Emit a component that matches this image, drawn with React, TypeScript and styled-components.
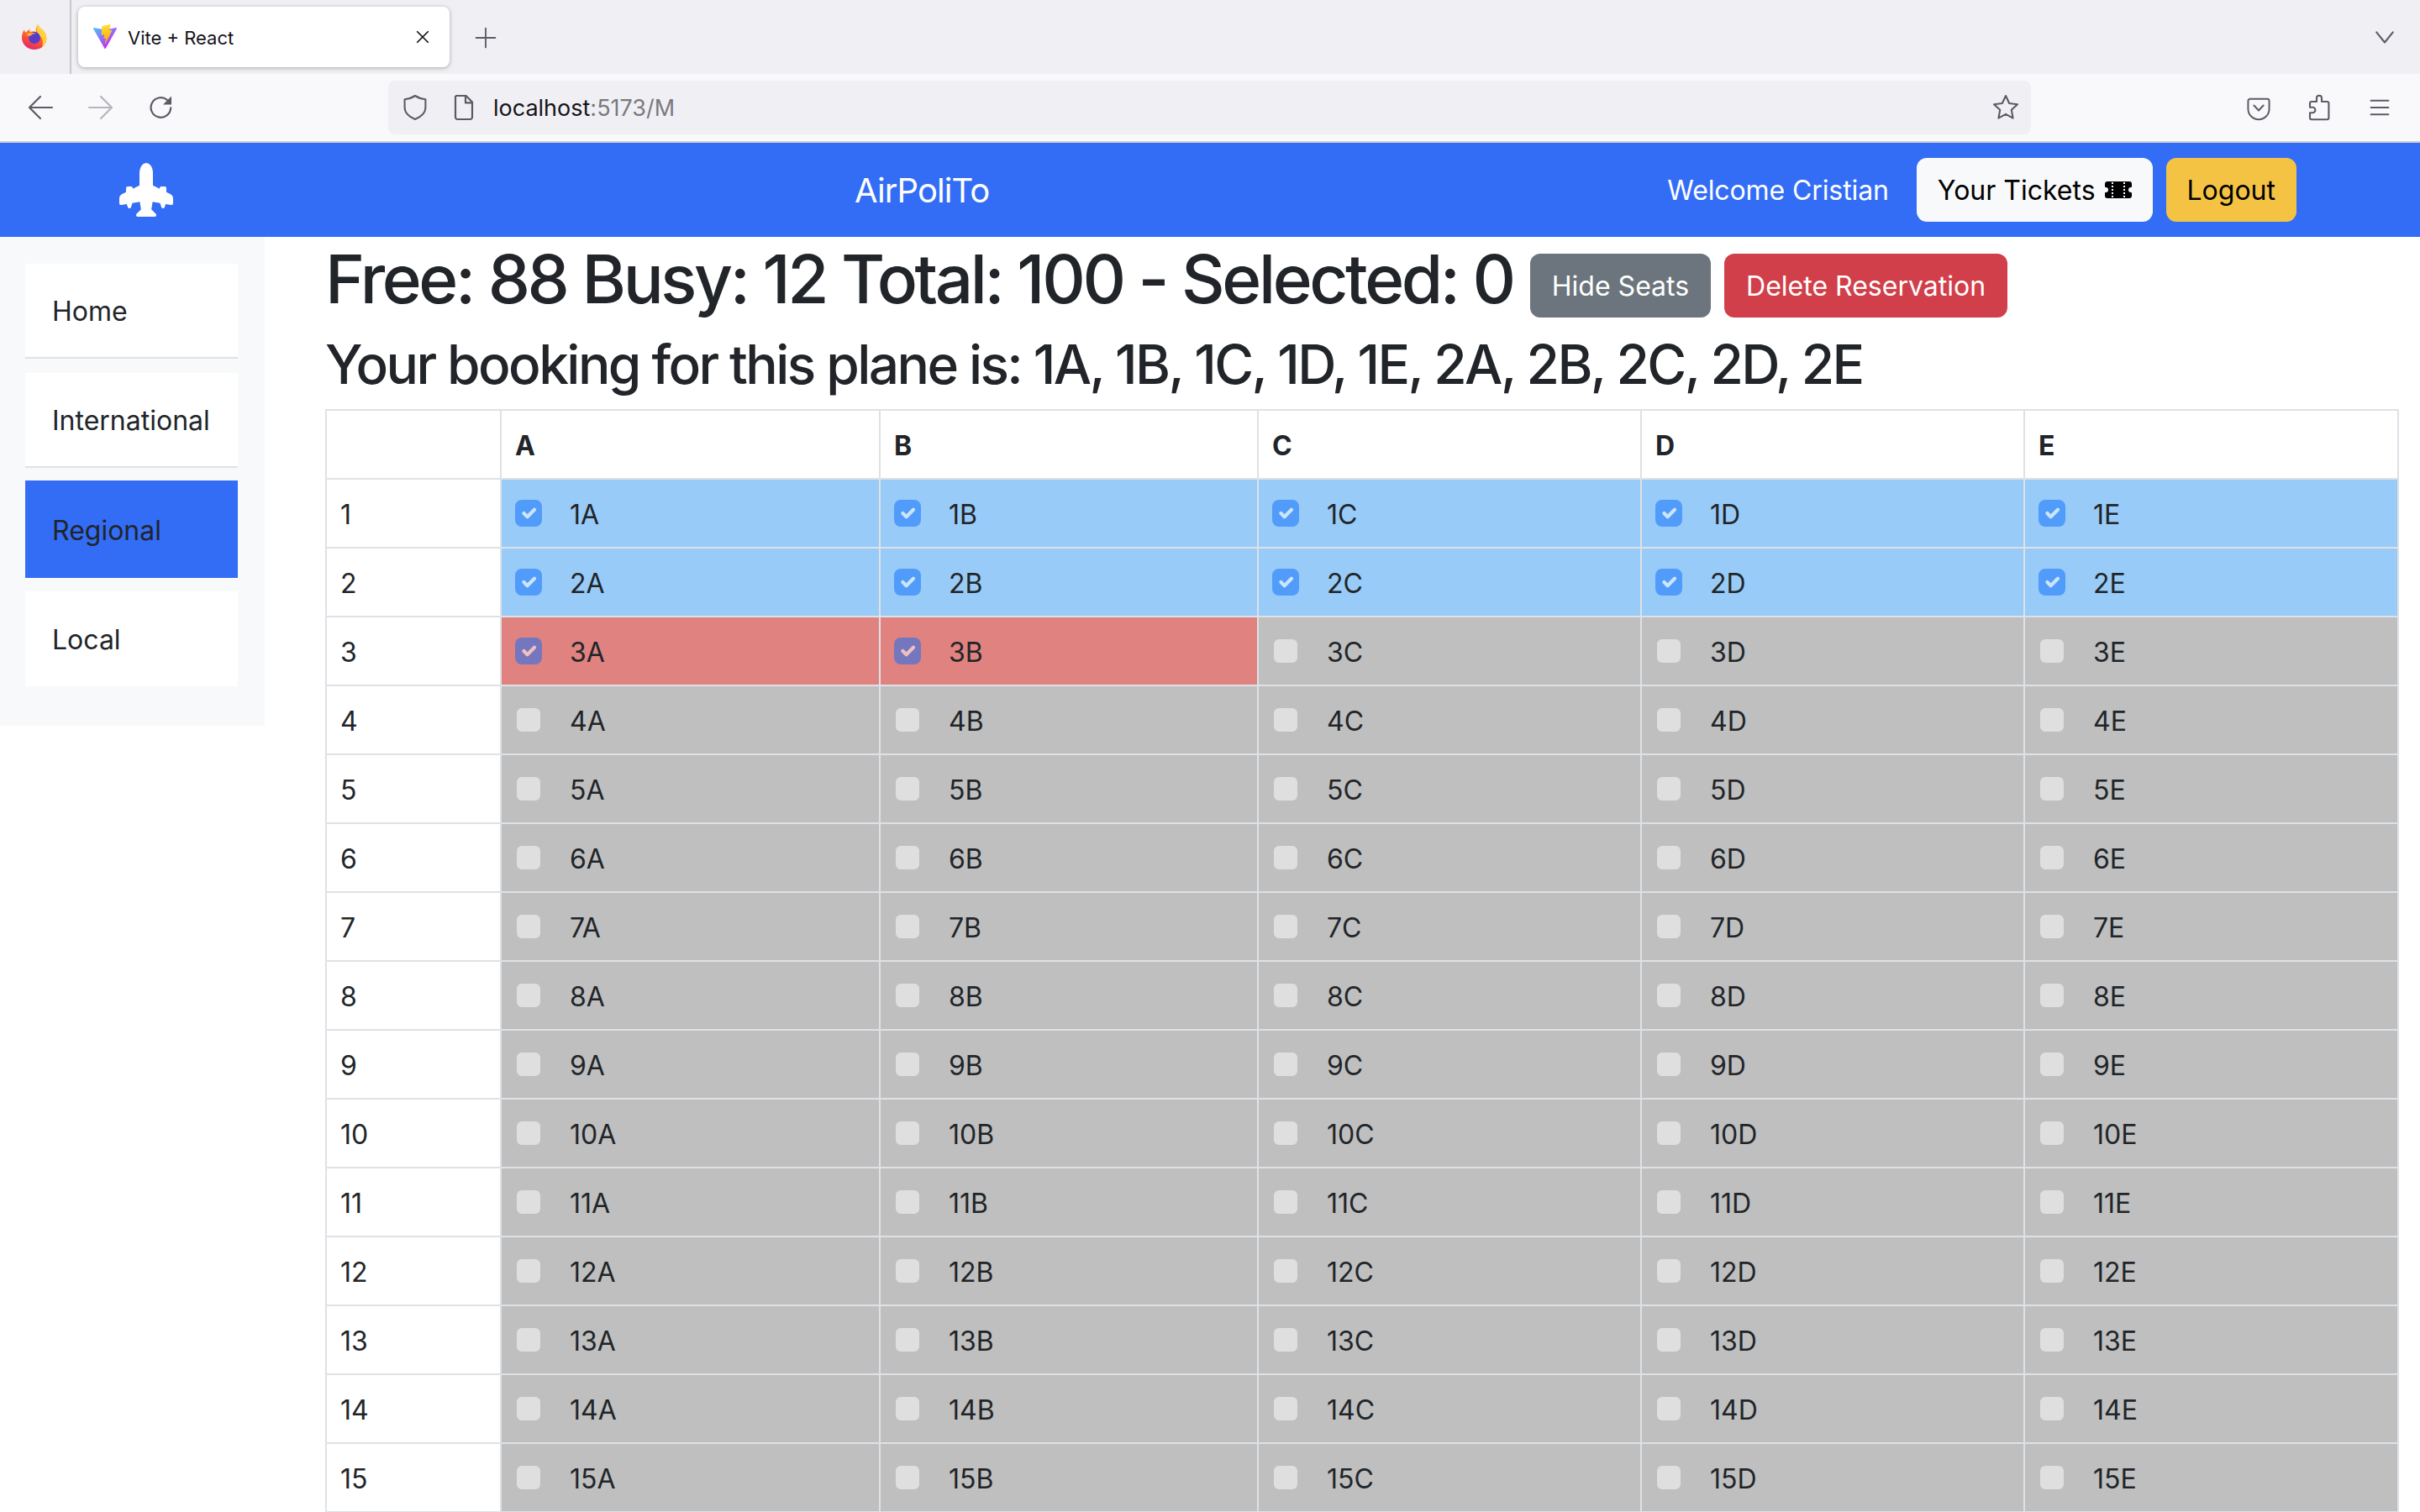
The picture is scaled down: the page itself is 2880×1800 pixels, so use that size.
import styled, { createGlobalStyle } from "styled-components";
import { BsAirplaneEnginesFill, BsTicketPerforatedFill } from "react-icons/bs";

const GlobalStyle = createGlobalStyle`
    html, body {
        margin: 0;
        height: 1800px;
        overflow: hidden;
        background: #fff;
        font-family: Inter, "Liberation Sans", sans-serif;
        color: #212529;
    }
    * {
        box-sizing: border-box;
    }
`

const TabStrip = styled.div`
    height: 88px;
    background: #f0f0f4;
    display: flex;
    align-items: flex-start;
`
const AppIconBox = styled.div`
    width: 85px;
    height: 88px;
    padding: 28px 0 0 25px;
    border-right: 2px solid #c8c8cc;
`
const Tab = styled.div`
    width: 442px;
    height: 72px;
    margin: 8px 0 0 8px;
    padding: 0 22px 0 16px;
    background: #fff;
    border-radius: 8px;
    box-shadow: 0 1px 5px rgba(0, 0, 0, 0.3);
    display: flex;
    align-items: center;
`
const TabTitle = styled.span`
    font-size: 22px;
    margin: 2px 0 0 11px;
    color: #15141a;
    flex: 1;
`
const IconButton = styled.span<{ $size: number; $ml?: number; $mt?: number; $color?: string }>`
    display: flex;
    width: ${(p) => p.$size}px;
    height: ${(p) => p.$size}px;
    margin-left: ${(p) => p.$ml || 0}px;
    margin-top: ${(p) => p.$mt || 0}px;
    color: ${(p) => p.$color || "#5b5b66"};
    flex-shrink: 0;
    svg {
        width: 100%;
        height: 100%;
        display: block;
    }
`
const Toolbar = styled.div`
    height: 82px;
    background: #f9f9fb;
    border-bottom: 2px solid #cfcfd3;
    padding: 8px 0 0 32px;
    display: flex;
    align-items: flex-start;
`
const UrlBar = styled.div`
    width: 1955px;
    height: 64px;
    margin-left: 254px;
    padding: 0 14px 0 16px;
    background: #f0f0f4;
    border-radius: 8px;
    display: flex;
    align-items: center;
`
const UrlText = styled.span`
    font-size: 27px;
    margin: 1px 0 0 19px;
    color: #15141a;
    flex: 1;
    span {
        color: #7a7a80;
    }
`
const NavBar = styled.nav`
    height: 112px;
    background: #336df6;
    padding: 0 147px 0 142px;
    display: flex;
    align-items: center;
    color: #fff;
`
const Brand = styled.span`
    font-size: 40px;
    letter-spacing: -0.9px;
    margin-left: 811px;
`
const NavRight = styled.div`
    margin-left: auto;
    display: flex;
    align-items: center;
    gap: 16px;
`
const Welcome = styled.span`
    font-size: 32px;
    letter-spacing: -0.1px;
    margin-right: 17px;
`
const Button = styled.button<{ $bg: string; $fg: string }>`
    height: 76px;
    padding: 0 23px;
    border: 2px solid ${(p) => p.$bg};
    border-radius: 12px;
    background: ${(p) => p.$bg};
    color: ${(p) => p.$fg};
    font-family: inherit;
    font-size: 32px;
    display: inline-flex;
    align-items: center;
    gap: 11px;
`
const Body = styled.div`
    display: flex;
    align-items: flex-start;
`
const Sidebar = styled.aside`
    width: 315px;
    flex-shrink: 0;
    background: #f8f9fa;
    padding: 32px 32px 47px 30px;
    display: flex;
    flex-direction: column;
    gap: 17px;
`
const SideItem = styled.div<{ $active?: boolean; $line?: boolean }>`
    height: ${(p) => (p.$active ? 116 : 113)}px;
    margin: ${(p) => (p.$active ? "-2px 0 -1px" : "0")};
    padding: 2px 0 0 32px;
    background: ${(p) => (p.$active ? "#336df6" : "#fff")};
    border-bottom: ${(p) => (p.$line ? "2px solid #dee2e6" : "none")};
    font-size: 32px;
    display: flex;
    align-items: center;
`
const Main = styled.main`
    flex: 1;
    padding: 2px 26px 0 72px;
`
const SummaryRow = styled.div`
    display: flex;
    align-items: flex-start;
    margin-bottom: 14px;
`
const Title = styled.h1`
    margin: 0 20px 3px 0;
    font-size: 80px;
    font-weight: 500;
    line-height: 96px;
    letter-spacing: -3.4px;
    height: 94px;
    white-space: nowrap;
`
const SummaryButtons = styled.div`
    display: flex;
    gap: 16px;
    margin-top: 18px;
    button {
        padding: 0 24px;
    }
`
const SubTitle = styled.h2`
    margin: 0 0 15px;
    font-size: 64px;
    font-weight: 500;
    line-height: 77px;
    letter-spacing: -2.58px;
    white-space: nowrap;
`
const SeatTable = styled.table`
    width: 2466px;
    table-layout: fixed;
    border-collapse: collapse;
    font-size: 32px;
    line-height: 48px;
`
const Cell = styled.td<{ $bg?: string }>`
    padding: 18px 16px 14px;
    border: 2px solid #dee2e6;
    background: ${(p) => p.$bg || "#fff"};
`
const HeadCell = styled.th`
    padding: 18px 16px 14px;
    border: 2px solid #dee2e6;
    text-align: left;
    font-weight: 700;
`
const SeatLabel = styled.label`
    display: flex;
    align-items: center;
    gap: 33px;
`
const SeatBox = styled.input`
    appearance: none;
    width: 32px;
    height: 32px;
    margin: -4px 0 0;
    border: 2px solid rgba(0, 0, 0, 0.25);
    border-radius: 8px;
    background-color: #fff;
    opacity: 0.5;
    &:checked {
        background-color: #0d6efd;
        border-color: #0d6efd;
        background-image: url("data:image/svg+xml,%3csvg xmlns='http://www.w3.org/2000/svg' viewBox='0 0 20 20'%3e%3cpath fill='none' stroke='%23fff' stroke-linecap='round' stroke-linejoin='round' stroke-width='3' d='m6 10 3 3 6-6'/%3e%3c/svg%3e");
        background-size: 100% 100%;
    }
`

const Stroke = { fill: "none", stroke: "currentColor", strokeWidth: 1.15, strokeLinecap: "round", strokeLinejoin: "round" } as const

const FirefoxLogo = () => (
    <svg width="32" height="32" viewBox="0 0 32 32">
        <defs>
            <linearGradient id="ffBody" x1="0.7" y1="0" x2="0.3" y2="1">
                <stop offset="0" stopColor="#ffb02e" />
                <stop offset="0.55" stopColor="#ff5a2c" />
                <stop offset="1" stopColor="#e0246e" />
            </linearGradient>
        </defs>
        <path d="M20 1c1 3 4 5 6 7 4 4 5 9 4 13-2 6-7 10-14 10C8 31 1 25 1 17c0-4 1-7 3-10 0 2 1 3 2 4 1-2 3-4 5-4-1 1-1 2 0 3 2-1 5-1 7 0-1-3 0-6 2-9z" fill="url(#ffBody)" />
        <path d="M20 1c1 3 4 5 6 7 4 4 5 9 4 13-1 3-3 5-5 7 2-5 1-11-4-15-2-3-3-8-1-12z" fill="#ffd23c" />
        <circle cx="16" cy="17" r="7" fill="#5c3bc9" />
        <path d="M6 13c3-2 8-3 12-1-3 0-6 1-7 3-2 0-3-1-5-2z" fill="#ffb02e" />
    </svg>
)

const ViteLogo = () => (
    <svg width="32" height="32" viewBox="0 0 32 32">
        <defs>
            <linearGradient id="viteA" x1="6" y1="33" x2="235" y2="344" gradientUnits="userSpaceOnUse" gradientTransform="scale(0.078)">
                <stop offset="0" stopColor="#41d1ff" />
                <stop offset="1" stopColor="#bd34fe" />
            </linearGradient>
            <linearGradient id="viteB" x1="194" y1="8.8" x2="236" y2="292" gradientUnits="userSpaceOnUse" gradientTransform="scale(0.078)">
                <stop offset="0" stopColor="#ffea83" />
                <stop offset="0.08" stopColor="#ffdd35" />
                <stop offset="1" stopColor="#ffa800" />
            </linearGradient>
        </defs>
        <path d="M29.8836 6.146L16.7418 29.6457c-.2714.4851-.9684.488-1.2439.0052L2.0956 6.1482c-.3-.5262.1498-1.1635.7462-1.057l13.1559 2.3516a.7144.7144 0 00.2536-.0004l12.8806-2.3478c.5943-.1083 1.0464.5241.7517 1.0528Z" fill="url(#viteA)" />
        <path d="M22.2644 1.1188l-9.7255 1.9055a.3571.3571 0 00-.2879.3293l-.5982 10.1036c-.0141.238.2045.4227.4367.3691l2.7077-.6248c.2534-.0585.4824.1647.4302.4194l-.8045 3.9393c-.0541.2651.1947.4918.4536.4132l1.6724-.508c.2593-.0787.5083.1487.4536.414l-1.2784 6.1877c-.08.3871.4349.5982.6498.2663l.1434-.2215 7.9246-15.8152c.1327-.2648-.096-.5667-.3869-.5106l-2.787.5379c-.2619.0505-.4847-.1934-.4109-.4497l1.8191-6.3052c.0739-.2563-.1497-.5002-.4116-.4497Z" fill="url(#viteB)" />
    </svg>
)

const CloseIcon = () => (
    <svg viewBox="0 0 16 16"><path d="M3 3l10 10M13 3L3 13" {...Stroke} strokeWidth={1.4} /></svg>
)
const PlusIcon = () => (
    <svg viewBox="0 0 16 16"><path d="M8 1v14M1 8h14" {...Stroke} /></svg>
)
const ChevronIcon = () => (
    <svg viewBox="0 0 16 16"><path d="M2 4.5l6 7.5 6-7.5" {...Stroke} strokeWidth={1.3} /></svg>
)
const BackIcon = () => (
    <svg viewBox="0 0 16 16"><path d="M15 8H1.5M8 1.5L1.5 8 8 14.5" {...Stroke} strokeWidth={1.1} /></svg>
)
const ForwardIcon = () => (
    <svg viewBox="0 0 16 16"><path d="M1 8h13.5M8 1.5L14.5 8 8 14.5" {...Stroke} strokeWidth={1.1} /></svg>
)
const ReloadIcon = () => (
    <svg viewBox="0 0 16 16">
        <path d="M13.6 8.2A5.9 5.9 0 1 1 11.4 3.4" {...Stroke} strokeWidth={1.1} />
        <path d="M14 1.2v5H9z" fill="currentColor" />
    </svg>
)
const ShieldIcon = () => (
    <svg viewBox="0 0 16 16"><path d="M8 1C10 2.3 12 2.9 14.2 3.1V8C14.2 11 11.5 13.6 8 15 4.5 13.6 1.8 11 1.8 8V3.1C4 2.9 6 2.3 8 1Z" {...Stroke} strokeWidth={1.05} /></svg>
)
const PageIcon = () => (
    <svg viewBox="0 0 16 16">
        <path d="M3.5 1h5.8L13 4.8v9a1.2 1.2 0 0 1-1.2 1.2H4.2A1.2 1.2 0 0 1 3 13.8V1.5z" {...Stroke} strokeWidth={1.1} />
        <path d="M9 1v4.2h4" {...Stroke} strokeWidth={1.1} />
    </svg>
)
const StarIcon = () => (
    <svg viewBox="0 0 16 16"><path d="M8 1l2.1 4.5 4.9.6-3.6 3.3.9 4.9L8 11.9l-4.3 2.4.9-4.9L1 6.1l4.9-.6z" {...Stroke} strokeWidth={1.05} /></svg>
)
const PocketIcon = () => (
    <svg viewBox="0 0 16 16">
        <path d="M2.6 1.5h10.8a1.3 1.3 0 0 1 1.3 1.3v5a6.7 6.7 0 0 1-13.4 0v-5a1.3 1.3 0 0 1 1.3-1.3z" {...Stroke} strokeWidth={1.05} />
        <path d="M5 5.6l3 3.2 3-3.2" {...Stroke} strokeWidth={1.05} />
    </svg>
)
const PuzzleIcon = () => (
    <svg viewBox="0 0 16 16"><path d="M7 4.5V2.4a1.5 1.5 0 0 1 3 0v2.1h3.2a1 1 0 0 1 1 1v8.6a1 1 0 0 1-1 1H4a1 1 0 0 1-1-1v-3h1.6a1.6 1.6 0 0 0 0-3.2H3v-2.4a1 1 0 0 1 1-1z" {...Stroke} strokeWidth={1.05} /></svg>
)
const MenuIcon = () => (
    <svg viewBox="0 0 16 16"><path d="M1 2.5h14M1 8h14M1 13.5h14" {...Stroke} strokeWidth={1.2} /></svg>
)

const COLUMNS = ["A", "B", "C", "D", "E"]
const COL_WIDTHS = [208, 451, 450, 456, 456, 445]
const ROWS = Array.from({ length: 20 }, (_, i) => i + 1)

// le prime due file sono prenotate da me, 3A e 3B da altri
const seatColor = (row: number, col: string) => {
    if (row <= 2) return "#98cbf7"
    if (row === 3 && (col === "A" || col === "B")) return "#e08280"
    return "#bfbfbf"
}

function App() {
    return (
        <>
            <GlobalStyle />
            <TabStrip>
                <AppIconBox><FirefoxLogo /></AppIconBox>
                <Tab>
                    <ViteLogo />
                    <TabTitle>Vite + React</TabTitle>
                    <IconButton $size={20} $color="#15141a"><CloseIcon /></IconButton>
                </Tab>
                <IconButton $size={26} $ml={30} $mt={32}><PlusIcon /></IconButton>
                <IconButton $size={26} $ml={2234} $mt={31}><ChevronIcon /></IconButton>
            </TabStrip>
            <Toolbar>
                <IconButton $size={32} $mt={16}><BackIcon /></IconButton>
                <IconButton $size={32} $ml={40} $mt={16} $color="#b5b5bb"><ForwardIcon /></IconButton>
                <IconButton $size={32} $ml={40} $mt={16}><ReloadIcon /></IconButton>
                <UrlBar>
                    <IconButton $size={32}><ShieldIcon /></IconButton>
                    <IconButton $size={32} $ml={26}><PageIcon /></IconButton>
                    <UrlText>localhost<span>:5173/M</span></UrlText>
                    <IconButton $size={32}><StarIcon /></IconButton>
                </UrlBar>
                <IconButton $size={30} $ml={256} $mt={19}><PocketIcon /></IconButton>
                <IconButton $size={32} $ml={40} $mt={16}><PuzzleIcon /></IconButton>
                <IconButton $size={24} $ml={45} $mt={20}><MenuIcon /></IconButton>
            </Toolbar>
            <NavBar>
                <BsAirplaneEnginesFill size={64} />
                <Brand>AirPoliTo</Brand>
                <NavRight>
                    <Welcome>Welcome Cristian</Welcome>
                    <Button $bg="#f8f9fa" $fg="#000">Your Tickets <BsTicketPerforatedFill size={32} /></Button>
                    <Button $bg="#f5c344" $fg="#000">Logout</Button>
                </NavRight>
            </NavBar>
            <Body>
                <Sidebar>
                    <SideItem $line>Home</SideItem>
                    <SideItem $line>International</SideItem>
                    <SideItem $active>Regional</SideItem>
                    <SideItem>Local</SideItem>
                </Sidebar>
                <Main>
                    <SummaryRow>
                        <Title>Free: 88 Busy: 12 Total: 100 - Selected: 0</Title>
                        <SummaryButtons>
                            <Button $bg="#6c757d" $fg="#fff">Hide Seats</Button>
                            <Button $bg="#d13f4a" $fg="#fff">Delete Reservation</Button>
                        </SummaryButtons>
                    </SummaryRow>
                    <SubTitle>Your booking for this plane is: 1A, 1B, 1C, 1D, 1E, 2A, 2B, 2C, 2D, 2E</SubTitle>
                    <SeatTable>
                        <colgroup>
                            {COL_WIDTHS.map((w, i) => <col key={i} width={w} />)}
                        </colgroup>
                        <thead>
                            <tr>
                                <HeadCell>&nbsp;</HeadCell>
                                {COLUMNS.map((c) => <HeadCell key={c}>{c}</HeadCell>)}
                            </tr>
                        </thead>
                        <tbody>
                            {ROWS.map((row) => (
                                <tr key={row}>
                                    <Cell>{row}</Cell>
                                    {COLUMNS.map((col) => (
                                        <Cell key={col} $bg={seatColor(row, col)}>
                                            <SeatLabel>
                                                <SeatBox
                                                    type="checkbox"
                                                    disabled
                                                    defaultChecked={row <= 2 || (row === 3 && (col === "A" || col === "B"))}
                                                />
                                                {row}{col}
                                            </SeatLabel>
                                        </Cell>
                                    ))}
                                </tr>
                            ))}
                        </tbody>
                    </SeatTable>
                </Main>
            </Body>
        </>
    )
}

export default App;
